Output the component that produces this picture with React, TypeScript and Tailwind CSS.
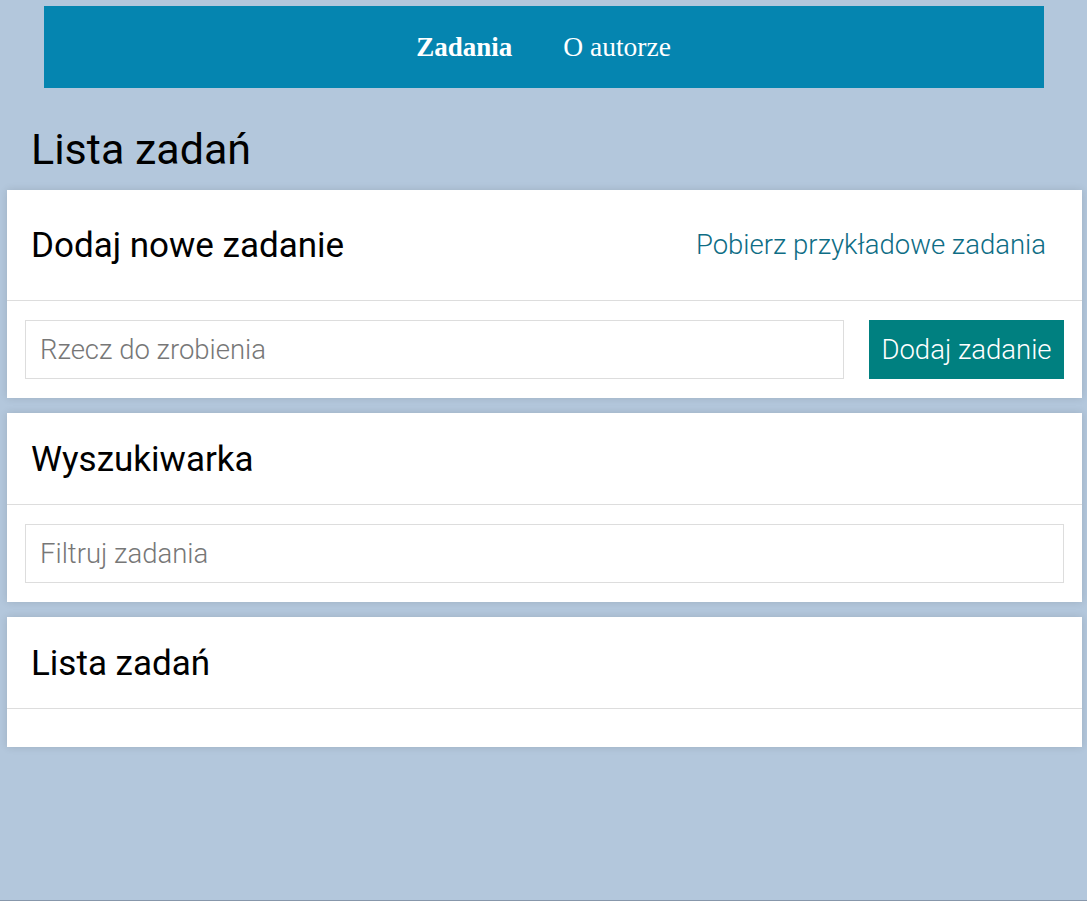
import { useState } from 'react'

function Card({ title, right, tall, children }: { title: string; right?: React.ReactNode; tall?: boolean; children?: React.ReactNode }) {
  return (
    <div className="mx-[7px] w-[1075px] bg-white shadow-[0_0_8px_rgba(0,0,0,0.12)]">
      <div
        className={
          'flex items-center justify-between border-b border-[#dddddd] pl-[24px] pr-[36px] ' +
          (tall ? 'h-[111px]' : 'h-[92px]')
        }
      >
        <h2 className="mt-[3px] text-[35px] font-normal text-black">{title}</h2>
        {right}
      </div>
      <div className="min-h-[38px] px-[18px] py-[19px]">{children}</div>
    </div>
  )
}

export default function App() {
  const [task, setTask] = useState('')
  const [filter, setFilter] = useState('')

  return (
    <div className="min-h-[901px] border-b border-[#8797ab] bg-[#b3c7dc] pt-[6px] font-['Roboto',sans-serif]">
      {/* Nav */}
      <nav className="mx-auto flex h-[82px] w-[1000px] items-center justify-center gap-[51px] bg-[#0585b0] font-['Liberation_Serif',serif] text-[27px] text-white">
        <a className="font-bold">Zadania</a>
        <a className="text-[27.5px]">O autorze</a>
      </nav>

      <h1 className="mt-[32px] mb-[12px] pl-[31px] text-[43px] leading-[58px] font-normal text-black">Lista zadań</h1>

      <div className="flex flex-col gap-[15px]">
        <Card
          tall
          title="Dodaj nowe zadanie"
          right={<a className="text-[27.5px] font-light text-[#0e6d85]">Pobierz przykładowe zadania</a>}
        >
          <div className="flex gap-[25px]">
            <input
              value={task}
              onChange={(e) => setTask(e.target.value)}
              placeholder="Rzecz do zrobienia"
              className="h-[59px] flex-1 border border-[#dddddd] px-[14px] text-[27.5px] font-light text-black outline-none placeholder:text-[#777777]"
            />
            <button className="h-[59px] w-[195px] bg-[#008080] text-[27.5px] font-light text-white">Dodaj zadanie</button>
          </div>
        </Card>

        <Card title="Wyszukiwarka">
          <input
            value={filter}
            onChange={(e) => setFilter(e.target.value)}
            placeholder="Filtruj zadania"
            className="h-[59px] w-full border border-[#dddddd] px-[14px] text-[27.5px] font-light text-black outline-none placeholder:text-[#777777]"
          />
        </Card>

        <Card title="Lista zadań" />
      </div>
    </div>
  )
}
